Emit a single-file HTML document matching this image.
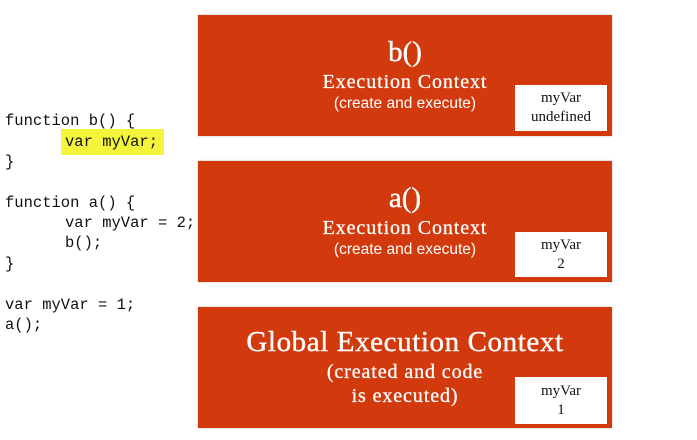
<!DOCTYPE html>
<html><head><meta charset="utf-8"><style>
html,body{margin:0;padding:0;background:#fff;width:697px;height:440px;overflow:hidden;position:relative}
.code{position:absolute;left:5px;top:0;font-family:"Liberation Mono",monospace;font-size:15.5px;color:#111;white-space:pre}
.code div{position:absolute;left:0;height:20px;line-height:20px}
.code div.i{left:60px}
.hl{position:absolute;left:61px;top:129px;width:103px;height:26px;background:#f4f53a}
.box{position:absolute;left:198px;width:414px;height:121px;background:#d2390c;box-shadow:0 0 2px #bbb;color:#fff;font-family:"Liberation Serif",serif;text-align:center}
.box .t1{position:absolute;left:0;width:414px;font-size:29px;-webkit-text-stroke:0.4px #fff}
.box .t2{position:absolute;left:0;width:414px;font-size:20px;letter-spacing:0.9px;-webkit-text-stroke:0.3px #fff}
.box .t3{position:absolute;left:0;width:414px;font-size:15.5px;font-family:"Liberation Sans",sans-serif}
.wb{position:absolute;left:317px;width:92px;background:#fff;color:#111;font-size:15px;line-height:19px;font-family:"Liberation Serif",serif}
</style></head><body>
<div class="hl"></div>
<div class="code">
<div style="top:111px">function b() {</div>
<div class="i" style="top:132px">var myVar;</div>
<div style="top:152px">}</div>
<div style="top:193px">function a() {</div>
<div class="i" style="top:213px">var myVar = 2;</div>
<div class="i" style="top:233px">b();</div>
<div style="top:254px">}</div>
<div style="top:295px">var myVar = 1;</div>
<div style="top:315px">a();</div>
</div>

<div class="box" style="top:15px">
<div class="t1" style="top:21px">b()</div>
<div class="t2" style="top:56px">Execution Context</div>
<div class="t3" style="top:80px">(create and execute)</div>
<div class="wb" style="top:70px;height:46px;padding-top:4px;box-sizing:border-box">myVar<br>undefined</div>
</div>

<div class="box" style="top:161px">
<div class="t1" style="top:21px">a()</div>
<div class="t2" style="top:56px">Execution Context</div>
<div class="t3" style="top:80px">(create and execute)</div>
<div class="wb" style="top:71px;height:45px;padding-top:4px;box-sizing:border-box">myVar<br>2</div>
</div>

<div class="box" style="top:307px">
<div class="t1" style="top:19px;letter-spacing:0.6px">Global Execution Context</div>
<div class="t2" style="top:54px">(created and code</div>
<div class="t2" style="top:78px">is executed)</div>
<div class="wb" style="top:70px;height:47px;padding-top:5px;box-sizing:border-box">myVar<br>1</div>
</div>
</body></html>
